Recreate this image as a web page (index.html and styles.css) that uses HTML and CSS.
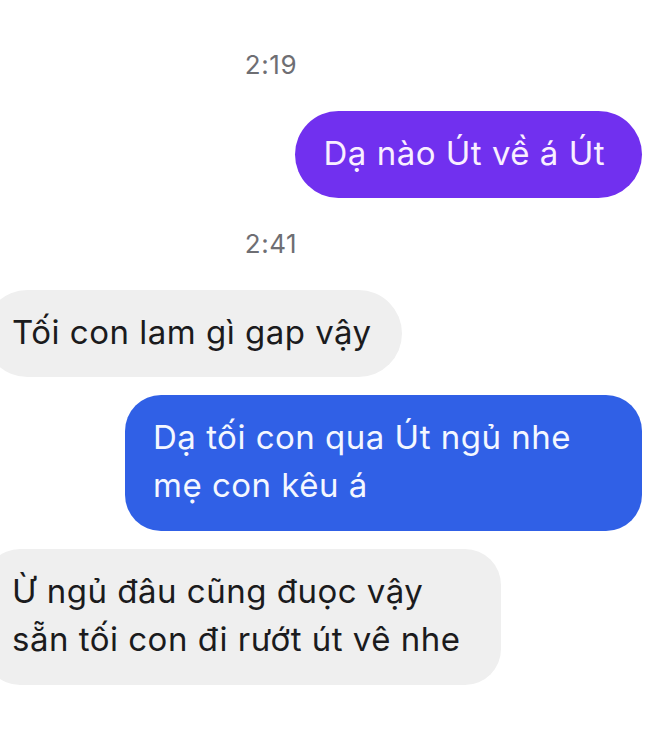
FILE: index.html
```html
<!DOCTYPE html>
<html lang="vi">
<head>
<meta charset="utf-8">
<title>Chat</title>
<link rel="stylesheet" href="styles.css">
</head>
<body>
<div class="chat">
  <div class="time">2:19</div>
  <div class="row out">
    <div class="bubble purple">Dạ nào Út về á Út</div>
  </div>
  <div class="time">2:41</div>
  <div class="row in">
    <div class="bubble grey">Tối con lam gì gap vậy</div>
  </div>
  <div class="row out tight">
    <div class="bubble blue wide">Dạ tối con qua Út ngủ nhe<br>mẹ con kêu á</div>
  </div>
  <div class="row in tight">
    <div class="bubble grey wide">Ừ ngủ đâu cũng đuọc vậy<br>sẵn tối con đi rướt út vê nhe</div>
  </div>
</div>
</body>
</html>
```

FILE: styles.css
```css
* { box-sizing: border-box; }
html, body {
  margin: 0;
  padding: 0;
  background: #ffffff;
}
body {
  font-family: Inter, "Noto Sans", "Liberation Sans", sans-serif;
  width: 647px;
  height: 732px;
  overflow: hidden;
}
.chat {
  display: flex;
  flex-direction: column;
  padding-top: 50px;
}
.time {
  font-size: 26px;
  line-height: 30px;
  letter-spacing: 0.6px;
  color: #6e6e73;
  text-align: center;
  padding-right: 105px;
  margin-bottom: 31px;
}
.row {
  display: flex;
}
.row.out {
  justify-content: flex-end;
  padding-right: 5px;
}
.row.in {
  justify-content: flex-start;
  margin-left: -16px;
}
.row.tight {
  margin-top: 18px;
}
.row + .time {
  margin-top: 31px;
}
.bubble {
  font-size: 33px;
  line-height: 48px;
  letter-spacing: 0.5px;
  padding: 18px 30px 21px;
  border-radius: 44px;
  white-space: nowrap;
}
.bubble.wide {
  width: 517px;
  border-radius: 36px;
  padding-bottom: 22px;
}
.purple {
  background: #7130ef;
  color: #f9efff;
  padding-left: 29px;
  padding-right: 37px;
}
.blue {
  background: #3060e6;
  color: #f4f7ff;
  padding-left: 28px;
}
.grey {
  background: #efefef;
  color: #1b1b1d;
  padding-left: 28px;
}
```
